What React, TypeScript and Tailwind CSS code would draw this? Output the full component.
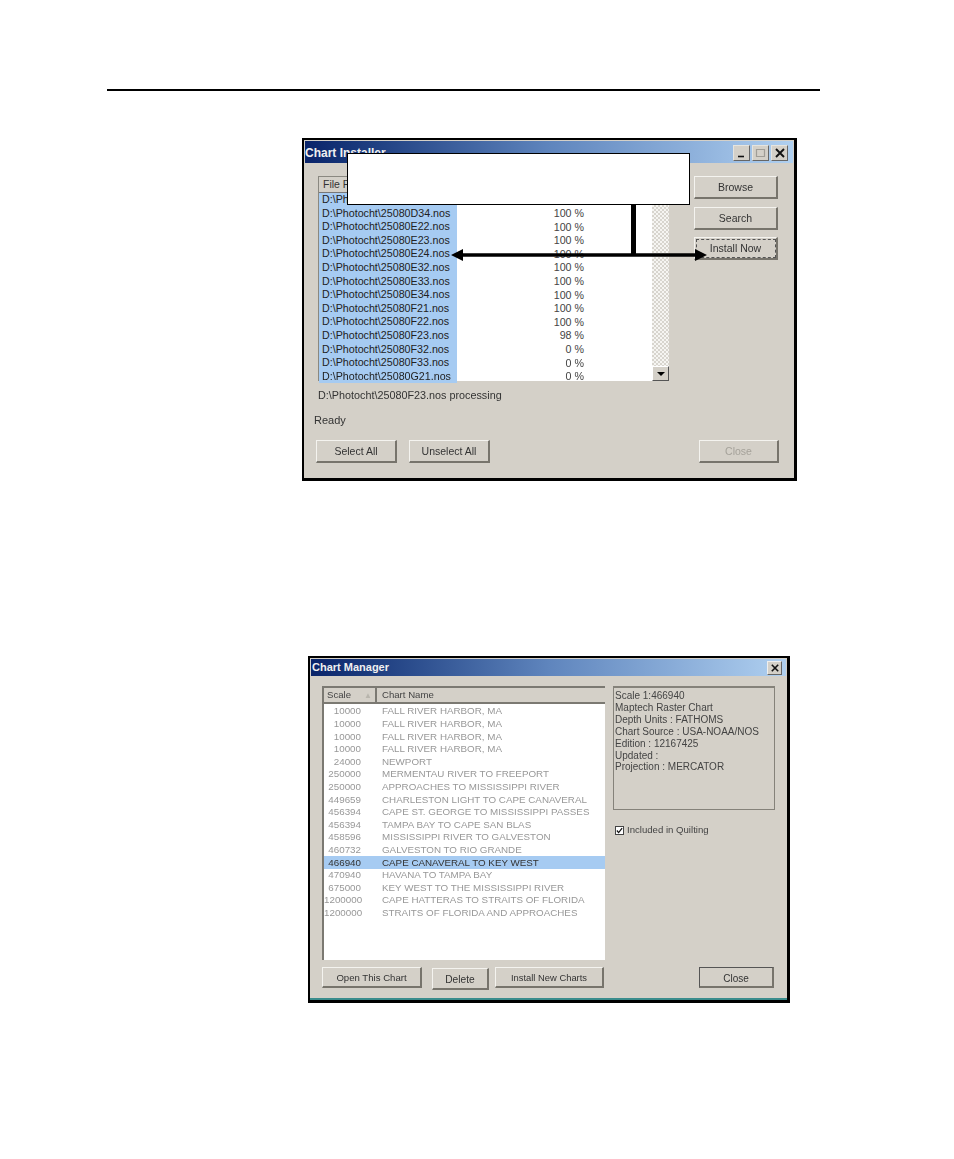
const font = "font-['Liberation_Sans',Arial,sans-serif]"

const installerRows = [
  ['D:\\Photocht\\25080D33.nos', '100 %'],
  ['D:\\Photocht\\25080D34.nos', '100 %'],
  ['D:\\Photocht\\25080E22.nos', '100 %'],
  ['D:\\Photocht\\25080E23.nos', '100 %'],
  ['D:\\Photocht\\25080E24.nos', '100 %'],
  ['D:\\Photocht\\25080E32.nos', '100 %'],
  ['D:\\Photocht\\25080E33.nos', '100 %'],
  ['D:\\Photocht\\25080E34.nos', '100 %'],
  ['D:\\Photocht\\25080F21.nos', '100 %'],
  ['D:\\Photocht\\25080F22.nos', '100 %'],
  ['D:\\Photocht\\25080F23.nos', '98 %'],
  ['D:\\Photocht\\25080F32.nos', '0 %'],
  ['D:\\Photocht\\25080F33.nos', '0 %'],
  ['D:\\Photocht\\25080G21.nos', '0 %'],
]

const charts = [
  ['10000', 'FALL RIVER HARBOR, MA'],
  ['10000', 'FALL RIVER HARBOR, MA'],
  ['10000', 'FALL RIVER HARBOR, MA'],
  ['10000', 'FALL RIVER HARBOR, MA'],
  ['24000', 'NEWPORT'],
  ['250000', 'MERMENTAU RIVER TO FREEPORT'],
  ['250000', 'APPROACHES TO MISSISSIPPI RIVER'],
  ['449659', 'CHARLESTON LIGHT TO CAPE CANAVERAL'],
  ['456394', 'CAPE ST. GEORGE TO MISSISSIPPI PASSES'],
  ['456394', 'TAMPA BAY TO CAPE SAN BLAS'],
  ['458596', 'MISSISSIPPI RIVER TO GALVESTON'],
  ['460732', 'GALVESTON TO RIO GRANDE'],
  ['466940', 'CAPE CANAVERAL TO KEY WEST'],
  ['470940', 'HAVANA TO TAMPA BAY'],
  ['675000', 'KEY WEST TO THE MISSISSIPPI RIVER'],
  ['1200000', 'CAPE HATTERAS TO STRAITS OF FLORIDA'],
  ['1200000', 'STRAITS OF FLORIDA AND APPROACHES'],
]

const chartInfo = [
  'Scale 1:466940',
  'Maptech Raster Chart',
  'Depth Units : FATHOMS',
  'Chart Source : USA-NOAA/NOS',
  'Edition : 12167425',
  'Updated :',
  'Projection : MERCATOR',
]

function WinButton({
  label,
  className,
  disabled,
  focused,
}: {
  label: string
  className: string
  disabled?: boolean
  focused?: boolean
}) {
  return (
    <div
      className={`flex items-center justify-center border-t border-l border-[#f4f3ef] border-r-2 border-b-2 border-r-[#77746c] border-b-[#77746c] bg-[#d4d0c8] pt-[2px] ${
        disabled ? 'text-[#a5a29a]' : 'text-[#333]'
      } ${focused ? 'outline-1 -outline-offset-3 outline-dashed outline-[#555]' : ''} ${className}`}
    >
      {label}
    </div>
  )
}

function TitleButton({ kind }: { kind: 'min' | 'max' | 'close' }) {
  return (
    <div className="flex h-4 w-[17px] items-center justify-center border-t border-l border-[#e6e4de] border-r border-b border-r-[#666] border-b-[#666] bg-[#d4d0c8]">
      <svg viewBox="0 0 12 10" className="h-[10px] w-3">
        {kind === 'min' && <path d="M2 8.5h6" stroke="#111" strokeWidth="1.6" />}
        {kind === 'max' && <path d="M1.5 1.5h8v7h-8z" fill="none" stroke="#a09d96" strokeWidth="1.2" />}
        {kind === 'close' && <path d="M2 1l8 8M10 1l-8 8" stroke="#111" strokeWidth="1.9" />}
      </svg>
    </div>
  )
}

function ChartInstaller() {
  return (
    <div className="relative ml-[302px] mt-[47px] h-[343px] w-[495px] border-[2px] border-r-[3px] border-b-[3px] border-black bg-[#d4d0c8]">
      <div className="flex h-full flex-col blur-[0.6px]">
        <div className="mx-px mt-px flex h-[22px] items-center justify-between bg-gradient-to-r from-[#0a246a] via-[#5f85bd] to-[#b0d0f0] pr-[5px]">
          <span className="pt-[2px] text-[12px] font-bold text-[#f0f0f0]">Chart Installer</span>
          <div className="mt-[2px] flex gap-[2px]">
            <TitleButton kind="min" />
            <TitleButton kind="max" />
            <TitleButton kind="close" />
          </div>
        </div>
        <div className="flex flex-1 flex-col">
          <div className="flex">
            <div className="ml-[14px] mt-[13px] flex h-[205px] w-[351px] border-l border-t border-[#8a8880] bg-white">
              <div className="min-w-0 flex-1">
                <div className="flex h-[16px] items-center border-b border-r border-[#777] bg-[#d4d0c8] pl-[4px] text-[10.5px] text-[#333]">
                  File Path
                </div>
                {installerRows.map(([path, pct]) => (
                  <div key={path} className="flex h-[13.6px] items-center text-[10.7px] leading-none text-[#222]">
                    <div className="w-[138px] overflow-hidden whitespace-nowrap bg-[#a6cbf2] pl-[3px] leading-[13.6px]">{path}</div>
                    <div className="w-[127px] text-right text-[#444]">{pct}</div>
                  </div>
                ))}
              </div>
              <div className="flex w-[17px] flex-col justify-end bg-[repeating-conic-gradient(#d8d5ce_0_25%,#f6f5f2_0_50%)] bg-[length:4px_4px]">
                <div className="flex h-[15px] items-center justify-center border-t border-l border-white border-r border-b border-r-[#555] border-b-[#555] bg-[#d4d0c8]">
                  <div className="h-0 w-0 border-x-[4px] border-t-[4px] border-x-transparent border-t-black" />
                </div>
              </div>
            </div>
            <div className="ml-[25px] mt-[13px] flex flex-col gap-[7.5px] text-[10.5px]">
              <WinButton label="Browse" className="h-[23px] w-[84px]" />
              <WinButton label="Search" className="h-[23px] w-[84px]" />
              <WinButton label="Install Now" className="h-[23px] w-[84px]" focused />
            </div>
          </div>
          <div className="ml-[14px] mt-[6px] text-[10.8px] text-[#333]">D:\Photocht\25080F23.nos processing</div>
          <div className="ml-[10px] mt-[9px] text-[11px] text-[#333]">Ready</div>
          <div className="ml-[12px] mr-[15px] mt-[11px] flex text-[10.5px]">
            <WinButton label="Select All" className="h-[23px] w-[81px]" />
            <WinButton label="Unselect All" className="ml-[12px] h-[23px] w-[81px]" />
            <WinButton label="Close" className="ml-auto h-[23px] w-[80px]" disabled />
          </div>
        </div>
      </div>

      <div className="absolute left-[43px] top-[13px] h-[52px] w-[343px] border border-black bg-white" />
      <div className="absolute left-[327px] top-[64px] h-[52px] w-[5px] bg-black" />
      <svg viewBox="0 0 256 12" className="absolute left-[147px] top-[109px] h-[12px] w-[256px]">
        <path d="M11 4.2h234v3.6H11z" fill="#000" />
        <path d="M0 6l12-6v12zM256 6l-12-6v12z" fill="#000" />
      </svg>
    </div>
  )
}

function ChartManager() {
  return (
    <div className="ml-[308px] mt-[175px] h-[347px] w-[482px] border-[2px] border-r-[3px] border-b-[3px] border-black bg-[#d4d0c8] shadow-[inset_0_-2px_0_#3a8c8c]">
      <div className="flex h-full flex-col blur-[0.6px]">
        <div className="mx-px mt-px flex h-[17px] items-center justify-between bg-gradient-to-r from-[#0a246a] via-[#5f85bd] to-[#b0d0f0] pl-[1px] pr-[4px]">
          <span className="text-[11px] font-bold text-[#f0f0f0]">Chart Manager</span>
          <div className="flex h-[14px] w-[15px] items-center justify-center border border-[#eee] border-r-[#666] border-b-[#666] bg-[#d4d0c8]">
            <svg viewBox="0 0 10 10" className="h-2 w-2">
              <path d="M1 1l8 8M9 1l-8 8" stroke="#111" strokeWidth="2" />
            </svg>
          </div>
        </div>
        <div className="flex">
          <div className="ml-[12px] mt-[10px] h-[274px] w-[283px] border-l-2 border-t-2 border-[#7b7972] bg-white">
            <div className="flex h-[16px] border-b-2 border-[#7b7972] bg-[#d4d0c8] text-[9.6px] leading-[13px] text-[#444]">
              <div className="relative w-[53px] border-r-2 border-[#7b7972] pl-[3px]">
                Scale
                <span className="absolute right-[3px] top-[1px] text-[8px] text-[#b8b5ad]">▲</span>
              </div>
              <div className="pl-[5px]">Chart Name</div>
            </div>
            <div className="pt-[1px]">
              {charts.map(([scale, name]) => {
                const selected = scale === '466940'
                return (
                  <div
                    key={scale + name}
                    className={`flex h-[12.6px] items-center whitespace-nowrap text-[9.8px] leading-none ${
                      selected ? 'bg-[#a6cbf2] text-[#333]' : 'text-[#989898]'
                    }`}
                  >
                    <div className="w-[37px] text-right">{scale}</div>
                    <div className="ml-[21px]">{name}</div>
                  </div>
                )
              })}
            </div>
          </div>
          <div className="ml-[8px] mt-[10px] flex flex-col">
            <div className="h-[124px] w-[162px] border-t-2 border-l border-r border-b border-[#85827a] pl-[1px] pt-[2px] text-[10px] leading-[11.9px] text-[#444]">
              {chartInfo.map((line) => (
                <div key={line} className="whitespace-nowrap">{line}</div>
              ))}
            </div>
            <div className="ml-[2px] mt-[13px] flex items-center gap-[3px] text-[9.6px] text-[#444]">
              <div className="flex h-[9px] w-[9px] items-center justify-center border border-[#444] bg-white">
                <svg viewBox="0 0 8 8" className="h-[7px] w-[7px]">
                  <path d="M1 4l2 2.4L7 1.2" fill="none" stroke="#111" strokeWidth="1.4" />
                </svg>
              </div>
              Included in Quilting
            </div>
          </div>
        </div>
        <div className="ml-[12px] mr-[13px] mt-[7px] flex items-start text-[9.6px]">
          <WinButton label="Open This Chart" className="h-[21px] w-[100px]" />
          <WinButton label="Delete" className="ml-[10px] mt-px h-[22px] w-[57px] text-[10.2px]" />
          <WinButton label="Install New Charts" className="ml-[6px] h-[21px] w-[109px] text-[9.4px]" />
          <WinButton
            label="Close"
            className="ml-auto h-[21px] w-[75px] border-t-[#555] border-l-[#555] text-[10px]"
          />
        </div>
      </div>
    </div>
  )
}

export default function App() {
  return (
    <div className={`h-[1159px] w-[954px] overflow-hidden bg-white ${font}`}>
      <div className="ml-[107px] mt-[89px] h-[2px] w-[713px] bg-black" />
      <ChartInstaller />
      <ChartManager />
    </div>
  )
}
